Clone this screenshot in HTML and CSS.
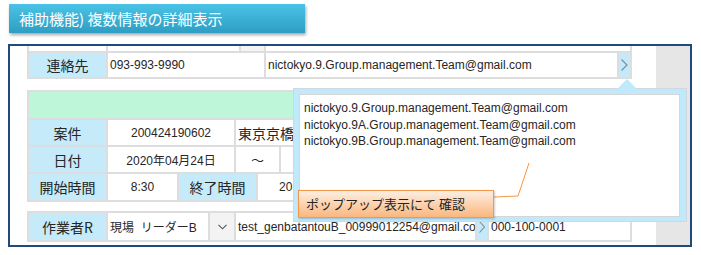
FILE: index.html
```html
<!DOCTYPE html>
<html lang="ja">
<head>
<meta charset="utf-8">
<link rel="stylesheet" href="styles.css">
</head>
<body>
<div class="title">補助機能) 複数情報の詳細表示</div>
<div class="frame">
  <div class="content">
    <div class="tbl blk1">
      <div class="row h24">
        <div class="c w77"></div>
        <div class="c w131"></div>
        <div class="c w23 grey"></div>
        <div class="c w364"></div>
      </div>
      <div class="row h24">
        <div class="c lbl w77">連絡先</div>
        <div class="c w156">093-993-9990</div>
        <div class="c w351">nictokyo.9.Group.management.Team@gmail.com</div>
        <div class="c arrow w11"><svg width="7" height="12" viewBox="0 0 7 12"><polyline points="0.5,0.5 6,6 0.5,11.5" fill="none" stroke="#7d8a96" stroke-width="1.1"/></svg></div>
      </div>
    </div>
    <div class="tbl blk2">
      <div class="row h26 green"></div>
      <div class="row h25">
        <div class="c lbl w77">案件</div>
        <div class="c ctr w126">200424190602</div>
        <div class="c w394 jp">東京京橋</div>
      </div>
      <div class="row h25">
        <div class="c lbl w77">日付</div>
        <div class="c ctr w126">2020年04月24日</div>
        <div class="c ctr w43 tilde">～</div>
        <div class="c w349"></div>
      </div>
      <div class="row h26">
        <div class="c lbl w77">開始時間</div>
        <div class="c ctr w69">8:30</div>
        <div class="c lbl w77">終了時間</div>
        <div class="c ctr w72">20:00</div>
        <div class="c w298"></div>
      </div>
    </div>
    <div class="tbl blk3">
      <div class="row h27">
        <div class="c lbl w77">作業者R</div>
        <div class="c w100">現場&nbsp; リーダーB</div>
        <div class="c ctr w24 grey"><svg width="9" height="6" viewBox="0 0 9 6"><polyline points="0.5,0.8 4.5,4.8 8.5,0.8" fill="none" stroke="#555" stroke-width="1.1"/></svg></div>
        <div class="c w239">test_genbatantouB_00999012254@gmail.com</div>
        <div class="c arrow w10"><svg width="6" height="12" viewBox="0 0 6 12"><polyline points="0.5,0.5 5.5,6 0.5,11.5" fill="none" stroke="#7d8a96" stroke-width="1.1"/></svg></div>
        <div class="c w141">000-100-0001</div>
      </div>
    </div>
  </div>
  <div class="side"></div>

  <div class="popup">
    <div class="tip"></div>
    <div class="popup-inner">
      <div class="mail">nictokyo.9.Group.management.Team@gmail.com</div>
      <div class="mail">nictokyo.9A.Group.management.Team@gmail.com</div>
      <div class="mail">nictokyo.9B.Group.management.Team@gmail.com</div>
    </div>
  </div>
  <svg class="leader" width="680" height="199" viewBox="0 0 680 199"><polyline points="484,151 508,150 519,117" fill="none" stroke="#f79646" stroke-width="1"/></svg>
  <div class="callout">ポップアップ表示にて 確認</div>
</div>
</body>
</html>
```
FILE: styles.css
```css
* { box-sizing: border-box; }
html, body { margin: 0; padding: 0; background: #fff; }
body {
  width: 701px;
  height: 255px;
  overflow: hidden;
  font-family: "Liberation Sans", "Noto Sans CJK JP", sans-serif;
  color: #262626;
}
.title {
  margin: 4px 0 0 9px;
  width: 296px;
  height: 29px;
  background: linear-gradient(#4ac3e6, #2e9ec3);
  box-shadow: 1px 2px 3px rgba(0,0,0,0.35);
  color: #fff;
  font-family: "Noto Sans CJK JP", sans-serif;
  font-size: 15px;
  line-height: 29px;
  padding-left: 10px;
}
.frame {
  position: relative;
  margin: 11px 0 0 8px;
  width: 684px;
  height: 203px;
  border: 2px solid #1f4a7c;
  display: flex;
  overflow: hidden;
}
.content {
  width: 646px;
  padding-left: 17px;
  display: flex;
  flex-direction: column;
}
.side {
  width: 34px;
  background: #e6e6e6;
}
.tbl {
  width: 605px;
  background: #dddddd;
  padding: 2px;
  display: flex;
  flex-direction: column;
  gap: 2px;
  flex: none;
}
.blk1 { margin-top: -21px; }
.blk2 { margin-top: 11px; }
.blk3 { margin-top: 9px; }
.row { display: flex; gap: 2px; }
.h24 { height: 24px; }
.h25 { height: 25px; }
.h26 { height: 26px; }
.h27 { height: 27px; }
.green { background: #bef6da; }
.c {
  background: #fff;
  display: flex;
  align-items: center;
  padding-left: 2px;
  white-space: nowrap;
  overflow: hidden;
  font-size: 12px;
  flex: none;
}
.ctr { justify-content: center; padding-left: 0; }
.jp { font-family: "Noto Sans CJK JP", sans-serif; font-size: 14px; }
.lbl {
  background: #c5ebfa;
  justify-content: center;
  padding-left: 0;
  font-family: "Noto Sans CJK JP", sans-serif;
  font-size: 14px;
}
.grey { background: #f3f3f3; }
.arrow { background: #c2eafb; justify-content: center; padding-left: 0; }
.tilde { font-family: "Noto Sans CJK JP", sans-serif; font-size: 13px; }
.w10 { width: 10px; }
.w11 { width: 11px; }
.w23 { width: 23px; }
.w24 { width: 24px; }
.w43 { width: 43px; }
.w69 { width: 69px; }
.w72 { width: 72px; }
.w77 { width: 77px; }
.w100 { width: 100px; }
.w126 { width: 126px; }
.w131 { width: 131px; }
.w141 { width: 141px; }
.w156 { width: 156px; }
.w239 { width: 239px; }
.w298 { width: 298px; }
.w349 { width: 349px; }
.w351 { width: 351px; }
.w364 { width: 364px; }
.w394 { width: 394px; }

.popup {
  position: absolute;
  left: 283px;
  top: 42px;
  width: 394px;
  height: 134px;
  background: #c0eafb;
  border: 1px solid #cfd8dc;
  padding: 5px 6px 4px 5px;
  z-index: 2;
}
.tip {
  position: absolute;
  left: 323px;
  top: -10px;
  width: 0;
  height: 0;
  border-left: 10px solid transparent;
  border-right: 10px solid transparent;
  border-bottom: 10px solid #c0eafb;
}
.popup-inner {
  height: 100%;
  background: #fff;
  border: 1px solid #d6d6d6;
  padding: 5px 4px;
}
.mail {
  font-size: 12px;
  line-height: 16.5px;
  white-space: nowrap;
}
.leader {
  position: absolute;
  left: 0;
  top: 0;
  z-index: 3;
}
.callout {
  position: absolute;
  left: 288px;
  top: 144px;
  width: 196px;
  height: 28px;
  background: linear-gradient(#fdeee2, #fab77f);
  border: 1px solid #f79646;
  box-shadow: 1px 1px 2px rgba(0,0,0,0.2);
  font-family: "Noto Sans CJK JP", sans-serif;
  font-size: 13px;
  line-height: 26px;
  padding-left: 7px;
  color: #222;
  z-index: 4;
}
```
